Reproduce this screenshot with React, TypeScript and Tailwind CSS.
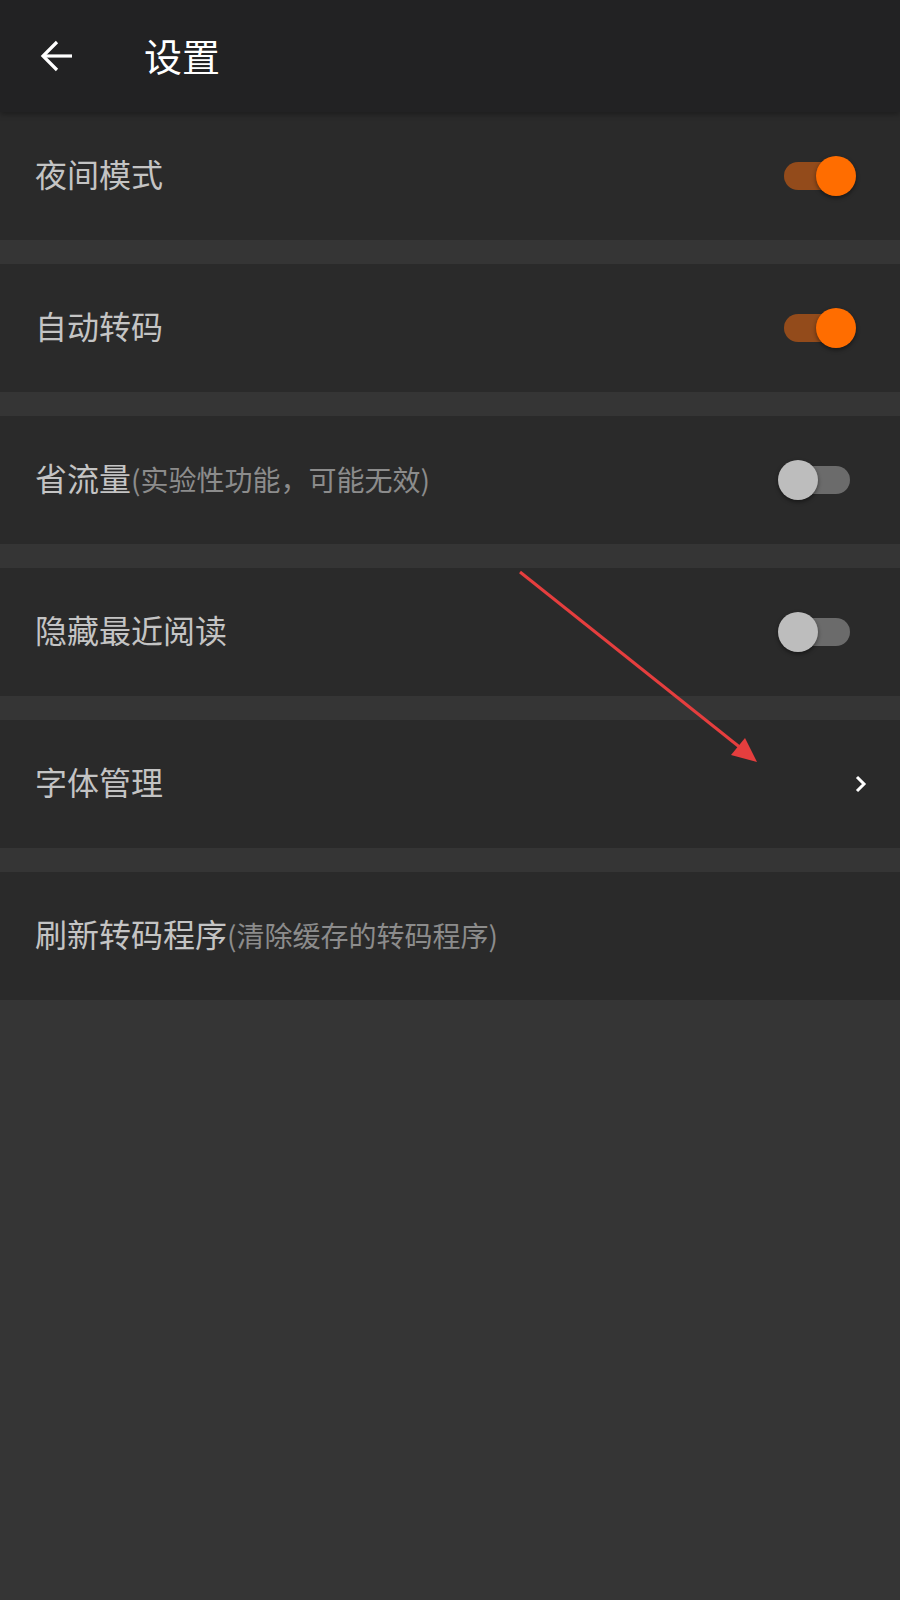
import { useState } from "react";

type Item = {
  label: string;
  hint?: string;
  kind: "toggle" | "link" | "none";
  on?: boolean;
};

const ITEMS: Item[] = [
  { label: "夜间模式", kind: "toggle", on: true },
  { label: "自动转码", kind: "toggle", on: true },
  { label: "省流量", hint: "(实验性功能，可能无效)", kind: "toggle", on: false },
  { label: "隐藏最近阅读", kind: "toggle", on: false },
  { label: "字体管理", kind: "link" },
  { label: "刷新转码程序", hint: "(清除缓存的转码程序)", kind: "none" },
];

function Toggle({ on, onClick }: { on: boolean; onClick: () => void }) {
  return (
    <button onClick={onClick} className="relative mr-[50px] h-[28px] w-[66px]">
      <span
        className={
          on
            ? "absolute inset-0 rounded-full bg-[#934b1b]"
            : "absolute inset-0 rounded-full bg-[#6b6b6b]"
        }
      />
      <span
        className={
          on
            ? "absolute top-[-6px] left-[32px] h-[40px] w-[40px] rounded-full bg-[#ff6d00] shadow-[0_2px_4px_rgba(0,0,0,0.45)]"
            : "absolute top-[-6px] left-[-6px] h-[40px] w-[40px] rounded-full bg-[#bdbdbd] shadow-[0_2px_4px_rgba(0,0,0,0.45)]"
        }
      />
    </button>
  );
}

export default function App() {
  const [state, setState] = useState(ITEMS.map((i) => !!i.on));

  return (
    <div
      className="relative min-h-[1600px] w-full bg-[#353535]"
      style={{ fontFamily: '"Noto Sans CJK SC", "Noto Sans", sans-serif' }}
    >
      <header className="relative z-10 flex h-[112px] items-center bg-[#222223] shadow-[0_2px_6px_rgba(0,0,0,0.35)]">
        <button className="ml-[40px] flex h-[32px] w-[32px] items-center justify-center">
          <svg width="32" height="32" viewBox="0 0 32 32" fill="none" stroke="white" strokeWidth="3.2">
            <path d="M3 16H32" />
            <path d="M17 2L3 16l14 14" />
          </svg>
        </button>
        <h1 className="ml-[72px] pb-[2px] text-[38px] leading-none font-normal text-white">设置</h1>
      </header>

      <div className="flex flex-col gap-[24px]">
        {ITEMS.map((item, i) => (
          <div key={item.label} className="flex h-[128px] items-center justify-between bg-[#2a2a2a]">
            <div className="ml-[35px] flex items-baseline pb-[7px]">
              <span className="text-[32px] text-[#c4c4c4]">{item.label}</span>
              {item.hint && <span className="text-[28px] text-[#8c8c8c]">{item.hint}</span>}
            </div>
            {item.kind === "toggle" && (
              <Toggle
                on={state[i]}
                onClick={() => setState((s) => s.map((v, j) => (j === i ? !v : v)))}
              />
            )}
            {item.kind === "link" && (
              <svg className="mr-[33px]" width="12" height="18" viewBox="0 0 12 18" fill="none" stroke="white" strokeWidth="3">
                <path d="M2 2l7 7-7 7" />
              </svg>
            )}
          </div>
        ))}
      </div>

      {/* annotation arrow */}
      <svg className="pointer-events-none absolute top-0 left-0" width="900" height="1600">
        <line x1="520" y1="572" x2="742" y2="749" stroke="#e53e3e" strokeWidth="3" />
        <polygon points="757,762 731,755 745,738" fill="#e53e3e" />
      </svg>
    </div>
  );
}
